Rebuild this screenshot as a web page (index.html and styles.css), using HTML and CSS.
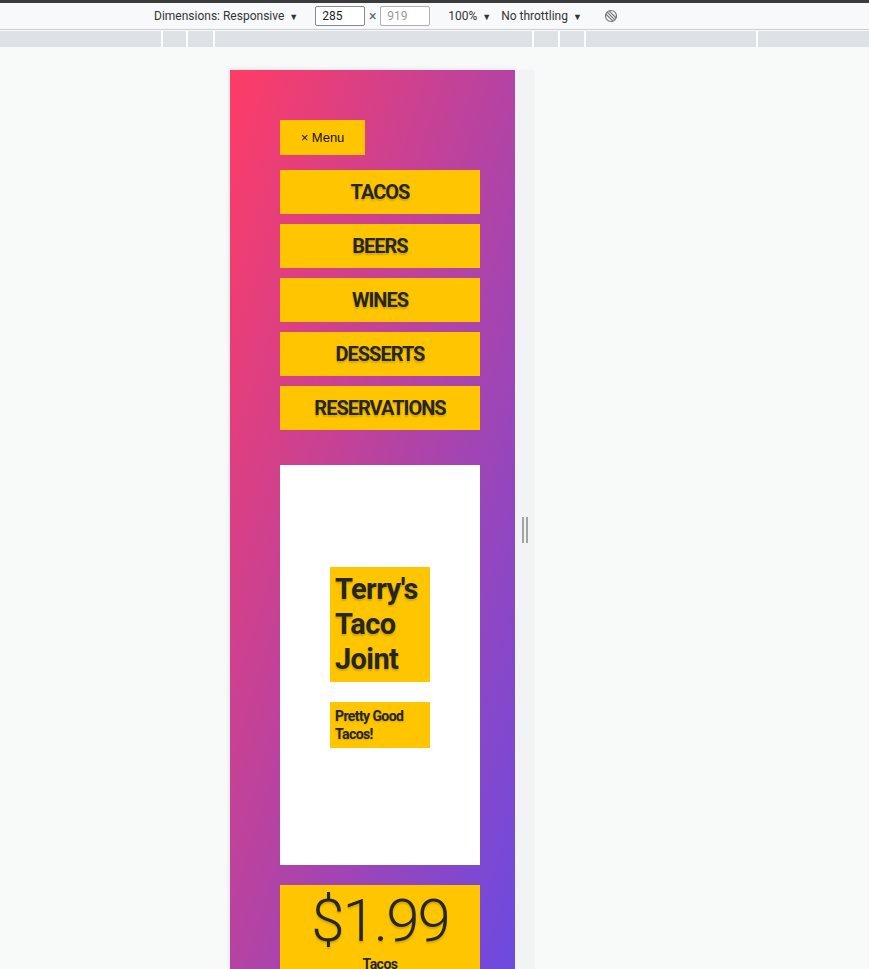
FILE: index.html
```html
<!DOCTYPE html>
<html lang="en">
<head>
  <meta charset="UTF-8">
  <title>Terry's Taco Joint - Responsive</title>
  <link rel="stylesheet" href="styles.css">
</head>
<body>
  <div class="topline"></div>
  <div class="toolbar">
    <span class="tool-dims">Dimensions: Responsive <span class="caret">&#9660;</span></span>
    <span class="tool-box">285</span>
    <span class="tool-x">&times;</span>
    <span class="tool-box muted">919</span>
    <span class="tool-zoom">100% <span class="caret">&#9660;</span></span>
    <span class="tool-throttle">No throttling <span class="caret">&#9660;</span></span>
    <svg class="tool-rotate" width="14" height="14" viewBox="0 0 14 14">
      <circle cx="7" cy="7" r="5.5" fill="none" stroke="#777" stroke-width="1.2"/>
      <line x1="3.2" y1="3.2" x2="10.8" y2="10.8" stroke="#777" stroke-width="1.2"/>
      <line x1="5" y1="1.8" x2="12.2" y2="9" stroke="#777" stroke-width="1.2"/>
      <line x1="1.8" y1="5" x2="9" y2="12.2" stroke="#777" stroke-width="1.2"/>
    </svg>
  </div>
  <div class="ruler">
    <div class="seg" style="width:161px"></div>
    <div class="seg" style="width:23px"></div>
    <div class="seg" style="width:25px"></div>
    <div class="seg" style="width:317px"></div>
    <div class="seg" style="width:24px"></div>
    <div class="seg" style="width:24px"></div>
    <div class="seg" style="width:170px"></div>
    <div class="seg last"></div>
  </div>

  <div class="canvas">
    <div class="device">
      <div class="page">
        <button class="menu-btn">&times; Menu</button>
        <nav class="nav">
          <a class="nav-item">TACOS</a>
          <a class="nav-item">BEERS</a>
          <a class="nav-item">WINES</a>
          <a class="nav-item">DESSERTS</a>
          <a class="nav-item">RESERVATIONS</a>
        </nav>

        <div class="hero">
          <h1 class="hero-title">Terry's Taco Joint</h1>
          <p class="hero-sub">Pretty Good Tacos!</p>
        </div>

        <div class="price">
          <div class="price-amount">$1.99</div>
          <div class="price-label">Tacos</div>
        </div>
      </div>
      <div class="handle-strip">
        <div class="handle"></div>
      </div>
    </div>
  </div>
</body>
</html>
```

FILE: styles.css
```css
html, body {
  margin: 0;
  height: 100%;
  overflow: hidden;
}

body {
  font-family: Roboto, "Liberation Sans", sans-serif;
  background: #f8f9f9;
  color: #333;
}

.topline {
  height: 3px;
  background: #3b3b3b;
}

.toolbar {
  height: 26px;
  display: flex;
  align-items: center;
  padding-left: 154px;
  font-size: 12px;
  color: #333;
  background: #f8f9fa;
  border-bottom: 1px solid #cbcdd1;
}

.caret {
  font-size: 9px;
  margin-left: 2px;
}

.tool-dims {
  margin-right: 17px;
}

.tool-box {
  box-sizing: border-box;
  width: 50px;
  height: 20px;
  line-height: 18px;
  padding-left: 6px;
  border: 1px solid #8a8a8a;
  border-radius: 2px;
  background: #fff;
  color: #222;
}

.tool-box.muted {
  color: #9a9a9a;
  border-color: #b0b0b0;
}

.tool-x {
  color: #666;
  font-size: 14px;
  width: 15px;
  text-align: center;
}

.tool-zoom {
  margin-left: 18px;
}

.tool-throttle {
  margin-left: 10px;
}

.tool-rotate {
  margin-left: 22px;
}

.ruler {
  display: flex;
  height: 16px;
  margin-top: 1px;
  background: #fff;
}

.seg {
  height: 16px;
  background: #dee1e6;
  margin-right: 2px;
  flex: none;
}

.seg.last {
  flex: 1;
  margin-right: 0;
}

.canvas {
  padding: 23px 0 0 230px;
}

.device {
  display: flex;
  align-items: stretch;
}

.page {
  box-sizing: border-box;
  width: 285px;
  height: 919px;
  padding: 50px 35px 0 50px;
  background: linear-gradient(to bottom right, #ff3c66, #6a4ae2);
  box-shadow: 0 0 5px rgba(0, 0, 0, 0.12);
}

.menu-btn {
  display: block;
  width: 85px;
  height: 35px;
  border: none;
  background: #ffc600;
  font-family: "Liberation Sans", Arial, sans-serif;
  font-size: 13px;
  color: #111;
  padding: 0;
}

.nav {
  display: flex;
  flex-direction: column;
  gap: 10px;
  margin-top: 15px;
}

.nav-item {
  display: block;
  width: 200px;
  height: 44px;
  line-height: 44px;
  background: #ffc600;
  text-align: center;
  font-size: 20px;
  font-weight: 700;
  letter-spacing: -1px;
  color: #262626;
  text-shadow: 0 2px 2px rgba(0, 0, 0, 0.18);
}

.hero {
  box-sizing: border-box;
  width: 200px;
  height: 400px;
  margin-top: 35px;
  padding: 102px 50px 0;
  background: #fff;
}

.hero-title {
  margin: 0;
  padding: 5px 4px 5px 5px;
  background: #ffc600;
  font-size: 29px;
  line-height: 35px;
  font-weight: 700;
  letter-spacing: -0.6px;
  color: #262626;
  text-shadow: 0 2px 2px rgba(0, 0, 0, 0.18);
}

.hero-sub {
  margin: 20px 0 0;
  padding: 5px;
  background: #ffc600;
  font-size: 14px;
  line-height: 18px;
  font-weight: 700;
  letter-spacing: -0.6px;
  color: #262626;
  text-shadow: 0 1px 2px rgba(0, 0, 0, 0.18);
}

.price {
  width: 200px;
  margin-top: 20px;
  padding-bottom: 20px;
  background: #ffc600;
  text-align: center;
  color: #262626;
}

.price-amount {
  font-size: 60px;
  font-weight: 300;
  line-height: 68px;
  letter-spacing: -2px;
  padding-top: 2px;
  text-shadow: 0 2px 2px rgba(0, 0, 0, 0.18);
}

.price-label {
  font-size: 14px;
  font-weight: 700;
  letter-spacing: -0.5px;
  padding-top: 1px;
}

.handle-strip {
  width: 20px;
  background: #f1f3f4;
  display: flex;
  justify-content: center;
  padding-top: 447px;
  align-items: flex-start;
}

.handle {
  width: 2px;
  height: 26px;
  border-left: 2px solid #a3a3a3;
  border-right: 2px solid #a3a3a3;
  box-sizing: content-box;
}
```
